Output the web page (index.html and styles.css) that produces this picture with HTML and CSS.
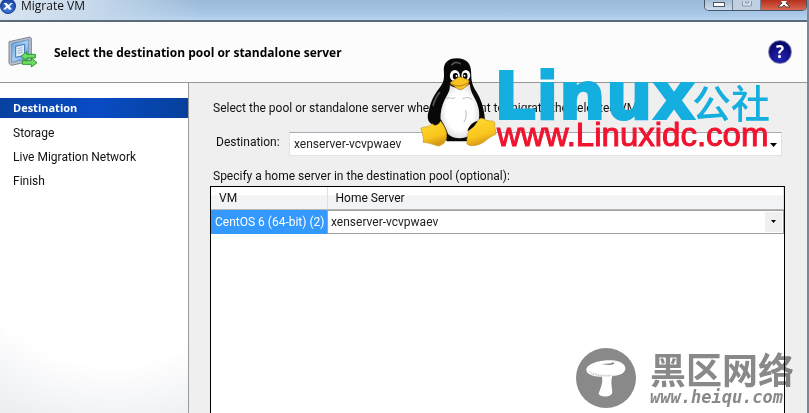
FILE: index.html
```html
<!DOCTYPE html>
<html lang="en">
<head>
<meta charset="utf-8">
<title>Migrate VM</title>
<link rel="stylesheet" href="styles.css">
</head>
<body>
<div class="window">
  <div class="titlebar">
    <svg class="app-icon" viewBox="0 0 16 16" aria-hidden="true">
      <defs><radialGradient id="app" cx=".5" cy=".7" r=".7"><stop offset="0" stop-color="#3f83e6"/><stop offset="1" stop-color="#153a9c"/></radialGradient></defs>
      <circle cx="8" cy="8" r="7.5" fill="url(#app)" stroke="#1c3f91"/>
      <path d="M3.500 5h3l2 2 2.500-2H13L9.500 8.200 12 11.500H9L7.400 9.700 5.500 11.500H3l3.200-3.300z" fill="#fff"/>
    </svg>
    <span class="title">Migrate VM</span>
    <div class="controls">
      <button class="control" type="button" aria-label="Minimize"><svg viewBox="0 0 14 8"><rect x="1.500" y="1.500" width="11" height="4" fill="#fff" stroke="#4a5666"/></svg></button>
      <button class="control control-off" type="button" aria-label="Maximize" disabled><svg viewBox="0 0 14 8"><path d="M2.500-3h9v8h-9zM5.500 0v2h3V0" fill="#d2dde9" stroke="#8b9aac"/></svg></button>
      <button class="control control-close" type="button" aria-label="Close"><svg viewBox="0 0 14 8"><path d="M4-3l3 3 3-3h3L9 2l4 4H9L7 4 5 6H1l4-4-4-5z" fill="#fff" stroke="#594448"/></svg></button>
    </div>
  </div>
  <header class="header">
    <svg class="header-icon" viewBox="0 0 90 96" aria-hidden="true">
      <defs><linearGradient id="scr" x2="1" y2="1"><stop stop-color="#5b9be0"/><stop offset=".5" stop-color="#a9d0f2"/><stop offset="1" stop-color="#4486d2"/></linearGradient></defs>
      <path d="M3 17L66 3l4 4v68L10 88l-7-6z" fill="#b9c0cb" stroke="#7c8495" stroke-width="3"/>
      <path d="M11 22l51-11v57L11 79z" fill="url(#scr)" stroke="#5c7fae" stroke-width="2"/>
      <path d="M23 31l27-6v33l-27 6z" fill="#e3edf6" stroke="#3973b8" stroke-width="3"/>
      <path d="M29 38l15-3M29 45l15-3M29 52l15-3" stroke="#9bb1c7" stroke-width="3"/>
      <path d="M39 61l17-14v8h26v11H56v8zM87 80L70 93v-8H43V74h27v-8z" fill="#70dc65" stroke="#269a2c" stroke-width="3" stroke-linejoin="round"/>
    </svg>
    <h1 class="heading">Select the destination pool or standalone server</h1>
    <button class="help" type="button" aria-label="Help">?</button>
  </header>
  <div class="body">
    <nav class="steps">
      <a class="step step-current" href="#" aria-current="step">Destination</a>
      <a class="step" href="#">Storage</a>
      <a class="step" href="#">Live Migration Network</a>
      <a class="step" href="#">Finish</a>
    </nav>
    <main class="main">
      <p class="intro">Select the pool or standalone server where you want to migrate the selected VM.</p>
      <div class="field">
        <label for="destination">Destination:</label>
        <span class="picker">
          <select id="destination"><option>xenserver-vcvpwaev</option></select>
          <svg class="arrow" viewBox="0 0 7 4" aria-hidden="true"><path d="M0 0h7L3.500 4z"/></svg>
        </span>
      </div>
      <p class="caption" id="servers">Specify a home server in the destination pool (optional):</p>
      <div class="grid">
        <table aria-labelledby="servers">
          <thead><tr><th class="vm">VM</th><th>Home Server</th></tr></thead>
          <tbody><tr>
            <td class="vm selected">CentOS 6 (64-bit) (2)</td>
            <td><span class="picker cell-picker">
              <select aria-label="Home Server"><option>xenserver-vcvpwaev</option></select>
              <span class="drop"><svg class="small-arrow" viewBox="0 0 5 3" aria-hidden="true"><path d="M0 0h5L2.500 3z"/></svg></span>
            </span></td>
          </tr></tbody>
        </table>
      </div>
    </main>
  </div>
  <div class="brand">
    <svg class="penguin" viewBox="30 20 230 270" aria-hidden="true">
      <defs>
        <linearGradient id="foot" x2=".3" y2="1"><stop stop-color="#ffdc31"/><stop offset=".7" stop-color="#fac51d"/><stop offset="1" stop-color="#d69a16"/></linearGradient>
        <radialGradient id="belly"><stop offset=".7" stop-color="#fff"/><stop offset="1" stop-color="#e2e2e2"/></radialGradient>
      </defs>
      <path d="M140 24c29 0 43 16 43 43 0 29 5 40 15 56 15 24 22 48 25 72 4 28-6 65-31 78H111c-20-14-34-33-45-51-15-8-16-25-10-41 6-28 16-49 34-71 10-13 13-24 11-47-2-25 12-39 39-39z" fill="#080808"/>
      <path d="M119 105c19 12 40 10 60-3 2 23 10 32 19 51 9 21 11 37 8 57-15 12-24 27-24 42-18 16-53 16-69-2-4-17-16-34-22-44-1-19 4-40 12-57 9-17 17-27 16-44z" fill="url(#belly)"/>
      <ellipse cx="134" cy="76" rx="15" ry="17" fill="#fff"/><ellipse cx="167" cy="75" rx="13" ry="16" fill="#fff"/>
      <ellipse cx="136" cy="78" rx="8" ry="10"/><ellipse cx="165" cy="77" rx="7" ry="10"/>
      <circle cx="139" cy="77" r="3" fill="#fff"/><circle cx="163" cy="76" r="3" fill="#fff"/>
      <path d="M121 96c11-5 18-15 30-16 9 1 15 7 26 11l-3 13c-8 3-12 13-24 14-11-2-17-12-28-16z" fill="#f8c321" stroke="#ac7916" stroke-width="2"/>
      <path d="M124 100c19 11 33 8 49-3" fill="none" stroke="#b78116" stroke-width="3"/>
      <path d="M106 146c11-9 19 3 29-4M157 146c14-8 20-4 29 2M166 180c4 15 2 24-5 36" fill="none" stroke="#bbb" stroke-width="3"/>
      <path d="M125 43c9-11 19-7 25-3M88 127c-10 11-15 24-19 38" fill="none" stroke="#555" stroke-width="5" stroke-linecap="round"/>
      <path d="M66 220c8 10 20 4 25-7 8 9 17 25 18 36 2 20-5 33-24 38-14-3-27-10-46-11 2-11 0-20-7-42 10-7 22 0 34-14z" fill="url(#foot)" stroke="#c9961e" stroke-width="2"/>
      <path d="M207 207c8-8 17 3 27 4 8 3 17-3 20 7-3 12 4 21 3 34-18 6-27 19-45 28-16 7-34 9-42 0 1-26 3-39 16-50 10-8 14-16 21-23z" fill="url(#foot)" stroke="#c9961e" stroke-width="2"/>
      <path d="M202 211c-6 14-14 21-30 32 1-12 11-25 30-32z"/>
    </svg>
    <div class="brand-text">
      <div class="brand-name"><span class="linux">Linux</span><span class="society">公社</span></div>
      <div class="brand-url">www.Linuxidc.com</div>
    </div>
  </div>
  <div class="mark">
    <svg class="mushroom" viewBox="0 0 180 180" aria-hidden="true">
      <circle cx="90" cy="90" r="90" fill="#898989"/>
      <path d="M31 66c0-18 40-31 75-29 25 1 42 11 42 24 1 13-16 24-39 22-5 15-2 31 0 49 0 17-39 18-41 4 7-19 13-32 10-50-28 1-46-8-47-20z" fill="#fff"/>
      <path d="M76 50c17-5 27-1 35-7 8 2 3 7-8 8-7 1-14-2-27-1z" fill="#898989"/>
      <path d="M38 70c18 10 44 14 70 11M46 77c18 7 36 8 56 7" fill="none" stroke="#aaa" stroke-width="2" stroke-dasharray="3 2"/>
    </svg>
    <div class="mark-text"><div class="mark-name">黑区网络</div><div class="mark-url">www.heiqu.com</div></div>
  </div>
</div>
</body>
</html>
```
FILE: styles.css
```css
* { box-sizing: border-box; }
body {
  margin: 0;
  font: 12px/16px Roboto, "Open Sans", sans-serif;
  color: #111;
}
button, select { font: inherit; }
h1, p { margin: 0; }
.window {
  position: relative;
  display: flex;
  flex-direction: column;
  min-height: 100vh;
  border-right: 2px solid #7b8896;
  background: #efefef;
  overflow: hidden;
}
.titlebar {
  display: flex;
  align-items: flex-start;
  height: 22px;
  gap: 5px;
  border-bottom: 2px solid #596b7b;
  background: linear-gradient(90deg, #d9e5f1 0, #c7d9eb 90px, transparent 200px), linear-gradient(#9bb8d8, #a8c7e7 70%, #bad5ef);
}
.app-icon { width: 16px; height: 16px; margin-top: -2px; }
.title { flex: 1; font: 12px/12px "Open Sans", sans-serif; }
.controls {
  display: flex;
  height: 11px;
  border: 1px solid #485566;
  border-top: 0;
  border-radius: 0 0 5px 5px;
  overflow: hidden;
}
.control {
  width: 28px;
  padding: 0;
  border: 0;
  border-right: 1px solid #6f7f91;
  background: linear-gradient(#a8bed5, #cbdced);
  line-height: 0;
}
.control svg { display: block; width: 14px; height: 8px; margin: 0 auto; }
.control-off { background: #c0d0e1; }
.control-close { width: 45px; border: 0; background: linear-gradient(#b6301d, #d96751); }
.header {
  display: flex;
  align-items: center;
  height: 61px;
  padding: 0 15px 0 8px;
  border-bottom: 1px solid #969696;
  background: #fcfcfc;
}
.header-icon { width: 30px; height: 32px; }
.heading { flex: 1; margin-left: 16px; padding-top: 2px; font: 700 12px/16px "Open Sans", sans-serif; color: #000; }
.help {
  width: 24px;
  height: 24px;
  padding: 0;
  border: 1px solid #8686b5;
  border-radius: 50%;
  background: radial-gradient(circle at 50% 80%, #2424b5, #08086c 75%);
  color: #fff;
  font: 700 17px/20px "Open Sans", sans-serif;
}
.body { display: flex; flex: 1; }
.steps {
  display: flex;
  flex-direction: column;
  gap: 4px;
  width: 189px;
  padding-top: 15px;
  border-right: 1px solid #999;
  background: radial-gradient(ellipse 240px 260px at 60% 30%, #fff 70%, #ebedf1 100%);
}
.step { padding: 3px 13px 1px; color: #111; text-decoration: none; }
.step-current {
  padding: 2px 13px;
  background: linear-gradient(90deg, #0741a0, #084bc5 50%, #07419d);
  color: #fff;
  font: 700 11px/16px "Open Sans", sans-serif;
}
.main {
  display: flex;
  flex: 1;
  flex-direction: column;
  padding: 17px 22px 0 21px;
}
.intro, .caption { padding-left: 3px; }
.field { display: flex; padding: 16px 3px 0 6px; }
.field label { width: 73px; padding-top: 2px; }
.picker { position: relative; display: flex; flex: 1; }
.picker select {
  width: 100%;
  height: 24px;
  padding: 0 4px;
  border: 1px solid #e2e2e2;
  border-top-color: #a3abb5;
  border-radius: 0;
  background: #fff;
  color: #222;
  appearance: none;
}
.arrow { position: absolute; right: 5px; top: 11px; width: 7px; height: 4px; }
.caption { padding-top: 12px; padding-bottom: 2px; }
.grid { flex: 1; border: 1px solid #000; border-bottom: 0; background: #fff; }
table { width: 100%; border-collapse: collapse; }
th, td { padding: 0; text-align: left; font-weight: 400; }
th {
  height: 22px;
  padding: 0 8px;
  border-right: 1px solid #e0e0e0;
  border-bottom: 1px solid #b8b8b8;
  background: linear-gradient(#fff 35%, #f2f3f5 40%, #f2f3f5);
}
.vm { width: 116px; white-space: nowrap; }
.selected { padding-left: 4px; background: #3399ff; color: #fff; }
.cell-picker select { padding: 0 3px; border-color: #a0a0a0; }
.drop {
  position: absolute;
  top: 2px;
  right: 2px;
  display: flex;
  align-items: center;
  justify-content: center;
  width: 17px;
  height: 20px;
  background: #f0f0f0;
  pointer-events: none;
}
.small-arrow { width: 5px; height: 3px; }
.brand {
  position: absolute;
  top: 57px;
  right: 34px;
  display: flex;
  pointer-events: none;
}
.penguin { width: 77px; height: 90px; }
.brand-text { width: 276px; white-space: nowrap; }
.brand-name { display: flex; align-items: flex-end; height: 64px; color: #14aedf; }
.linux {
  width: 198px;
  margin-left: -3px;
  font: 700 66px/48px "DejaVu Sans", sans-serif;
  -webkit-text-stroke: 2px #14aedf;
}
.society { font: 500 39px/40px "Noto Sans CJK SC", sans-serif; }
.brand-url {
  font: 33px/28px "Liberation Sans", sans-serif;
  color: #f0142f;
  -webkit-text-stroke: 1px #f0142f;
}
.mark {
  position: absolute;
  top: 348px;
  right: 12px;
  display: flex;
  gap: 14px;
  color: #898989;
  mix-blend-mode: multiply;
  pointer-events: none;
}
.mushroom { width: 60px; height: 60px; }
.mark-text { width: 145px; white-space: nowrap; }
.mark-name { font: oblique 10deg 700 36px/40px "Noto Sans CJK SC", sans-serif; }
.mark-url { font: italic 700 17px/18px "DejaVu Sans Mono", monospace; }
```
